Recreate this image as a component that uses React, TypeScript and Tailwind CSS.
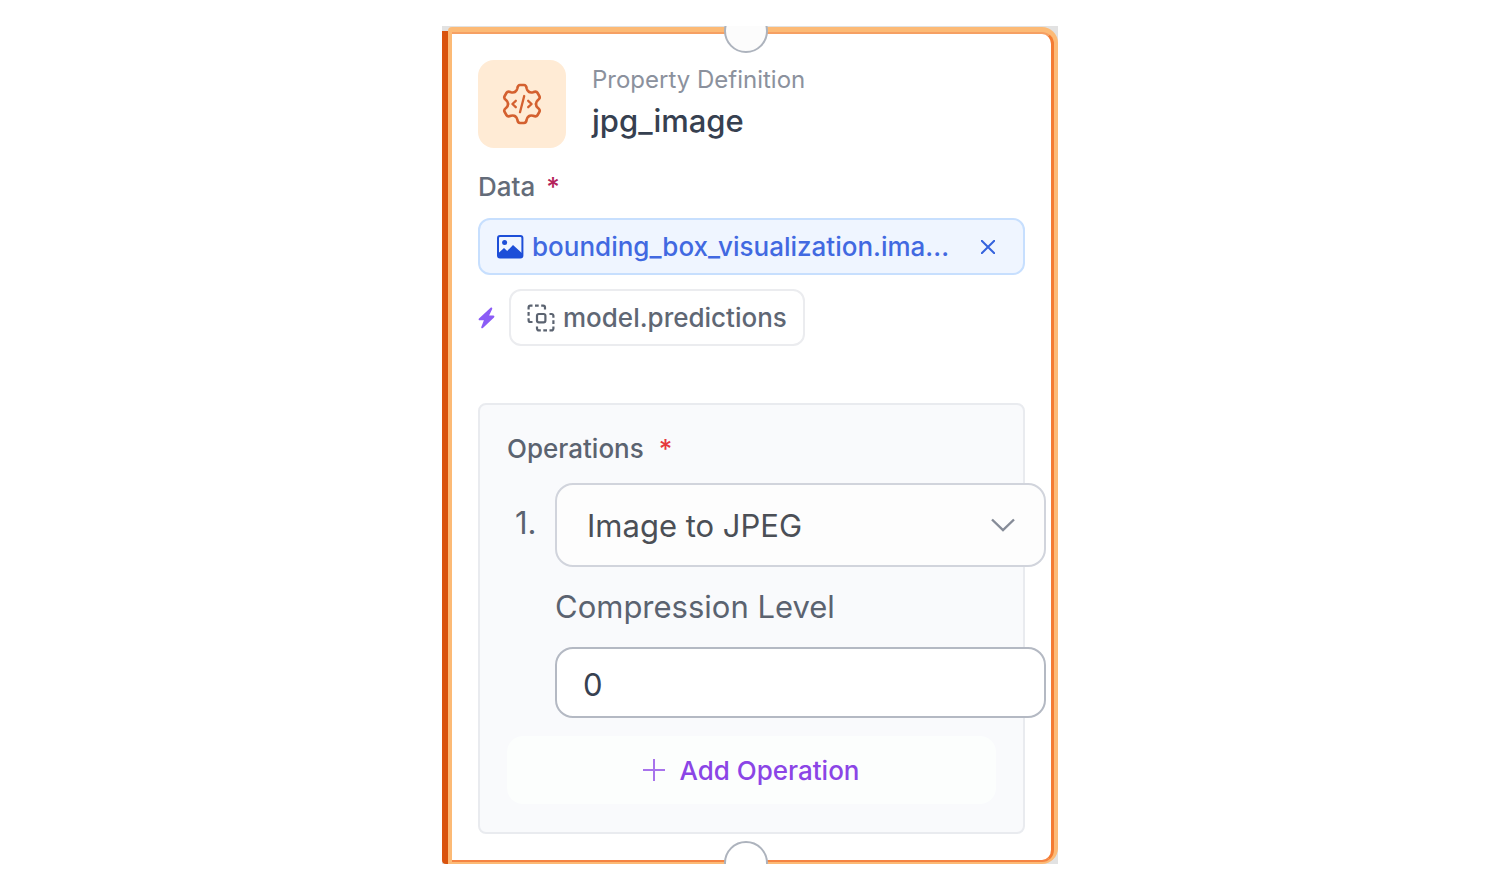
import { useState } from "react";

const GearCodeIcon = () => (
  <svg
    width="42"
    height="44"
    viewBox="-21 -22 42 44"
    fill="none"
    stroke="#d4602f"
    strokeWidth="2.6"
    strokeLinecap="round"
    strokeLinejoin="round"
    aria-hidden="true"
  >
    {[0, 60, 120, 180, 240, 300].map((angle) => (
      <path
        key={angle}
        transform={`rotate(${angle})`}
        d="M-7-12.1C-5.5-12.9-5-14-4.7-15.5Q-4.2-19-2-19H2Q4.2-19 4.7-15.5C5-14 5.5-12.9 7-12.1"
      />
    ))}
    <path d="M2.2-8 -2 8.2M-6.2-3.2 -9.6 0l3.4 3.2M6.2-3.2 9.6 0 6.2 3.2" strokeWidth="2.3" />
  </svg>
);

const ImageIcon = () => (
  <svg width="28" height="26" viewBox="0 0 28 26" fill="none" className="shrink-0" aria-hidden="true">
    <rect x="2" y="2" width="24.4" height="21.6" rx="2" stroke="#1d4ed8" strokeWidth="2" />
    <circle cx="8.6" cy="8.4" r="2.5" fill="#1d4ed8" />
    <path
      d="M2 19.5 8 14l3.2 3L17 11l9.4 8.5v2.6a1.6 1.6 0 0 1-1.6 1.6H3.6A1.6 1.6 0 0 1 2 22.1Z"
      fill="#1d4ed8"
    />
  </svg>
);

const PredictionsIcon = () => (
  <svg
    width="28"
    height="28"
    viewBox="0 0 28 28"
    fill="none"
    stroke="#5b6370"
    strokeWidth="2.2"
    className="shrink-0"
    aria-hidden="true"
  >
    <path d="M1.6 5.5V3.4A1.8 1.8 0 0 1 3.4 1.6H5.5M8 1.6h3.7M14.2 1.6h2A1.8 1.8 0 0 1 18 3.4V5.5M1.6 8v3.7M1.6 14.2v2A1.8 1.8 0 0 0 3.4 18H5.5" />
    <path d="M22.5 10h2.1a1.8 1.8 0 0 1 1.8 1.8v2M26.4 16.3V20M26.4 22.5v2.1a1.8 1.8 0 0 1-1.8 1.8H22.5M20 26.4h-3.7M13.8 26.4h-2a1.8 1.8 0 0 1-1.8-1.8V22.5" />
    <rect x="10" y="10" width="8.4" height="8.4" rx="1.8" />
  </svg>
);

const BoltIcon = () => (
  <svg width="17" height="22" viewBox="0 0 17 22" fill="#8b5cf6" className="shrink-0" aria-hidden="true">
    <path d="M12.6.8 1 11.4c-.8.8-.3 1.8.7 1.8h4.2L3.3 20c-.4 1.1.8 1.7 1.6.9L16 10.4c.8-.8.3-1.8-.7-1.8h-4.2L14.2 1.9c.4-1-.7-1.9-1.6-1.1Z" />
  </svg>
);

const App = () => {
  const [operation, setOperation] = useState("jpeg");
  const [level, setLevel] = useState("0");
  const [hasImage, setHasImage] = useState(true);

  return (
    <main className="flex min-h-screen justify-center bg-white pt-[26px] pb-[10px] pl-3 font-['Inter',sans-serif]">
      <article className="relative flex w-full max-w-[616px] self-start overflow-hidden bg-[#e2e2e2] pt-px">
        <div className="mt-1 w-[6px] shrink-0 rounded-bl-sm bg-[#d9530e]" />
        <div className="min-w-0 flex-1 rounded-tl-sm rounded-r-2xl bg-[#fcba76] pt-[5px] pr-1 pb-[2px] pl-1">
          <div className="rounded-r-xl border-y-2 border-r-[3px] border-t-[#f6a063] border-r-[#f47b32] border-b-[#f58443] bg-white px-[26px] pt-[26px] pb-[26px]">
            {/* header */}
            <header className="flex items-center gap-[26px]">
              <div className="flex size-[88px] shrink-0 items-center justify-center rounded-2xl bg-[#ffebd5]">
                <GearCodeIcon />
              </div>
              <div className="pb-[6px]">
                <p className="text-[24px] leading-[40px] text-[#8b919d]">Property Definition</p>
                <h1 className="text-[31px] leading-[42px] font-medium text-[#364050]">jpg_image</h1>
              </div>
            </header>

            {/* data */}
            <p className="mt-5 text-[26px] leading-[38px] font-medium text-[#646c79]">
              Data <span className="ml-1 text-[#b4235a]">*</span>
            </p>
            <div className="mt-3 flex flex-col gap-[14px]">
              {hasImage && (
                <div className="flex h-[57px] items-center rounded-xl border-2 border-[#c7dffe] bg-[#eff5ff] pr-6 pl-4">
                  <ImageIcon />
                  <span className="ml-2 flex-1 truncate text-[26px] leading-[40px] font-medium text-[#4169e1]">
                    bounding_box_visualization.ima...
                  </span>
                  <button
                    type="button"
                    aria-label="Remove"
                    onClick={() => setHasImage(false)}
                    className="flex size-[22px] items-center justify-center text-[#3563dd]"
                  >
                    <svg width="14" height="14" viewBox="0 0 14 14" stroke="currentColor" strokeWidth="2" aria-hidden="true">
                      <path d="M0 0l14 14M14 0 0 14" />
                    </svg>
                  </button>
                </div>
              )}
              <div className="flex items-center gap-[14px]">
                <BoltIcon />
                <button
                  type="button"
                  className="flex h-[57px] items-center gap-2 rounded-xl border-2 border-[#ebecef] bg-white px-4 text-[26px] font-medium text-[#5f6774]"
                >
                  <PredictionsIcon />
                  model.predictions
                </button>
              </div>
            </div>

            {/* operations */}
            <section className="mt-[57px] rounded-lg border-2 border-[#e9ebef] bg-[#f9fafc] px-[27px] pt-[26px] pb-7">
              <h2 className="text-[26px] leading-[36px] font-medium text-[#5b6370]">
                Operations <span className="ml-2 text-[#e5383b]">*</span>
              </h2>
              <ol className="mt-4">
                <li className="flex">
                  <span className="w-12 shrink-0 pt-[18px] pl-2 text-[31px] leading-[44px] text-[#5b6370]">1.</span>
                  <div className="-mr-[50px] min-w-0 flex-1">
                    <div className="relative">
                      <select
                        aria-label="Operation"
                        value={operation}
                        onChange={(e) => setOperation(e.target.value)}
                        className="block h-[84px] w-full appearance-none rounded-[18px] border-2 border-[#d1d4dc] bg-[#fdfdfd] px-[30px] pt-[2px] text-[31px] text-[#4b4f56]"
                      >
                        <option value="jpeg">Image to JPEG</option>
                      </select>
                      <svg
                        width="24"
                        height="14"
                        viewBox="0 0 24 14"
                        fill="none"
                        stroke="#868c98"
                        strokeWidth="2.4"
                        className="pointer-events-none absolute top-[35px] right-[31px]"
                        aria-hidden="true"
                      >
                        <path d="M1 1.5 12 12.2 23 1.5" />
                      </svg>
                    </div>
                    <label htmlFor="level" className="mt-[18px] block text-[31px] leading-[44px] text-[#5b6370]">
                      Compression Level
                    </label>
                    <input
                      id="level"
                      type="text"
                      value={level}
                      onChange={(e) => setLevel(e.target.value)}
                      className="mt-[18px] block h-[71px] w-full rounded-[18px] border-2 border-[#b4b9c3] bg-white px-[26px] pt-1 text-[31px] text-[#374151]"
                    />
                  </div>
                </li>
              </ol>
              <button
                type="button"
                className="mt-[18px] flex h-[68px] w-full items-center justify-center gap-[14px] rounded-2xl bg-[#fcfefd] text-[26px] font-medium text-[#8b45e6]"
              >
                <svg width="22" height="22" viewBox="0 0 22 22" stroke="#a873ec" strokeWidth="2" aria-hidden="true">
                  <path d="M11 0v22M0 11h22" />
                </svg>
                Add Operation
              </button>
            </section>
          </div>
        </div>

        {/* connection handles */}
        <span className="absolute -top-[17px] left-[282px] size-11 rounded-full border-2 border-[#adb3bd] bg-[#fcfcfc]" />
        <span className="absolute -bottom-[21px] left-[282px] size-11 rounded-full border-2 border-[#adb3bd] bg-white" />
      </article>
    </main>
  );
};

export default App;
